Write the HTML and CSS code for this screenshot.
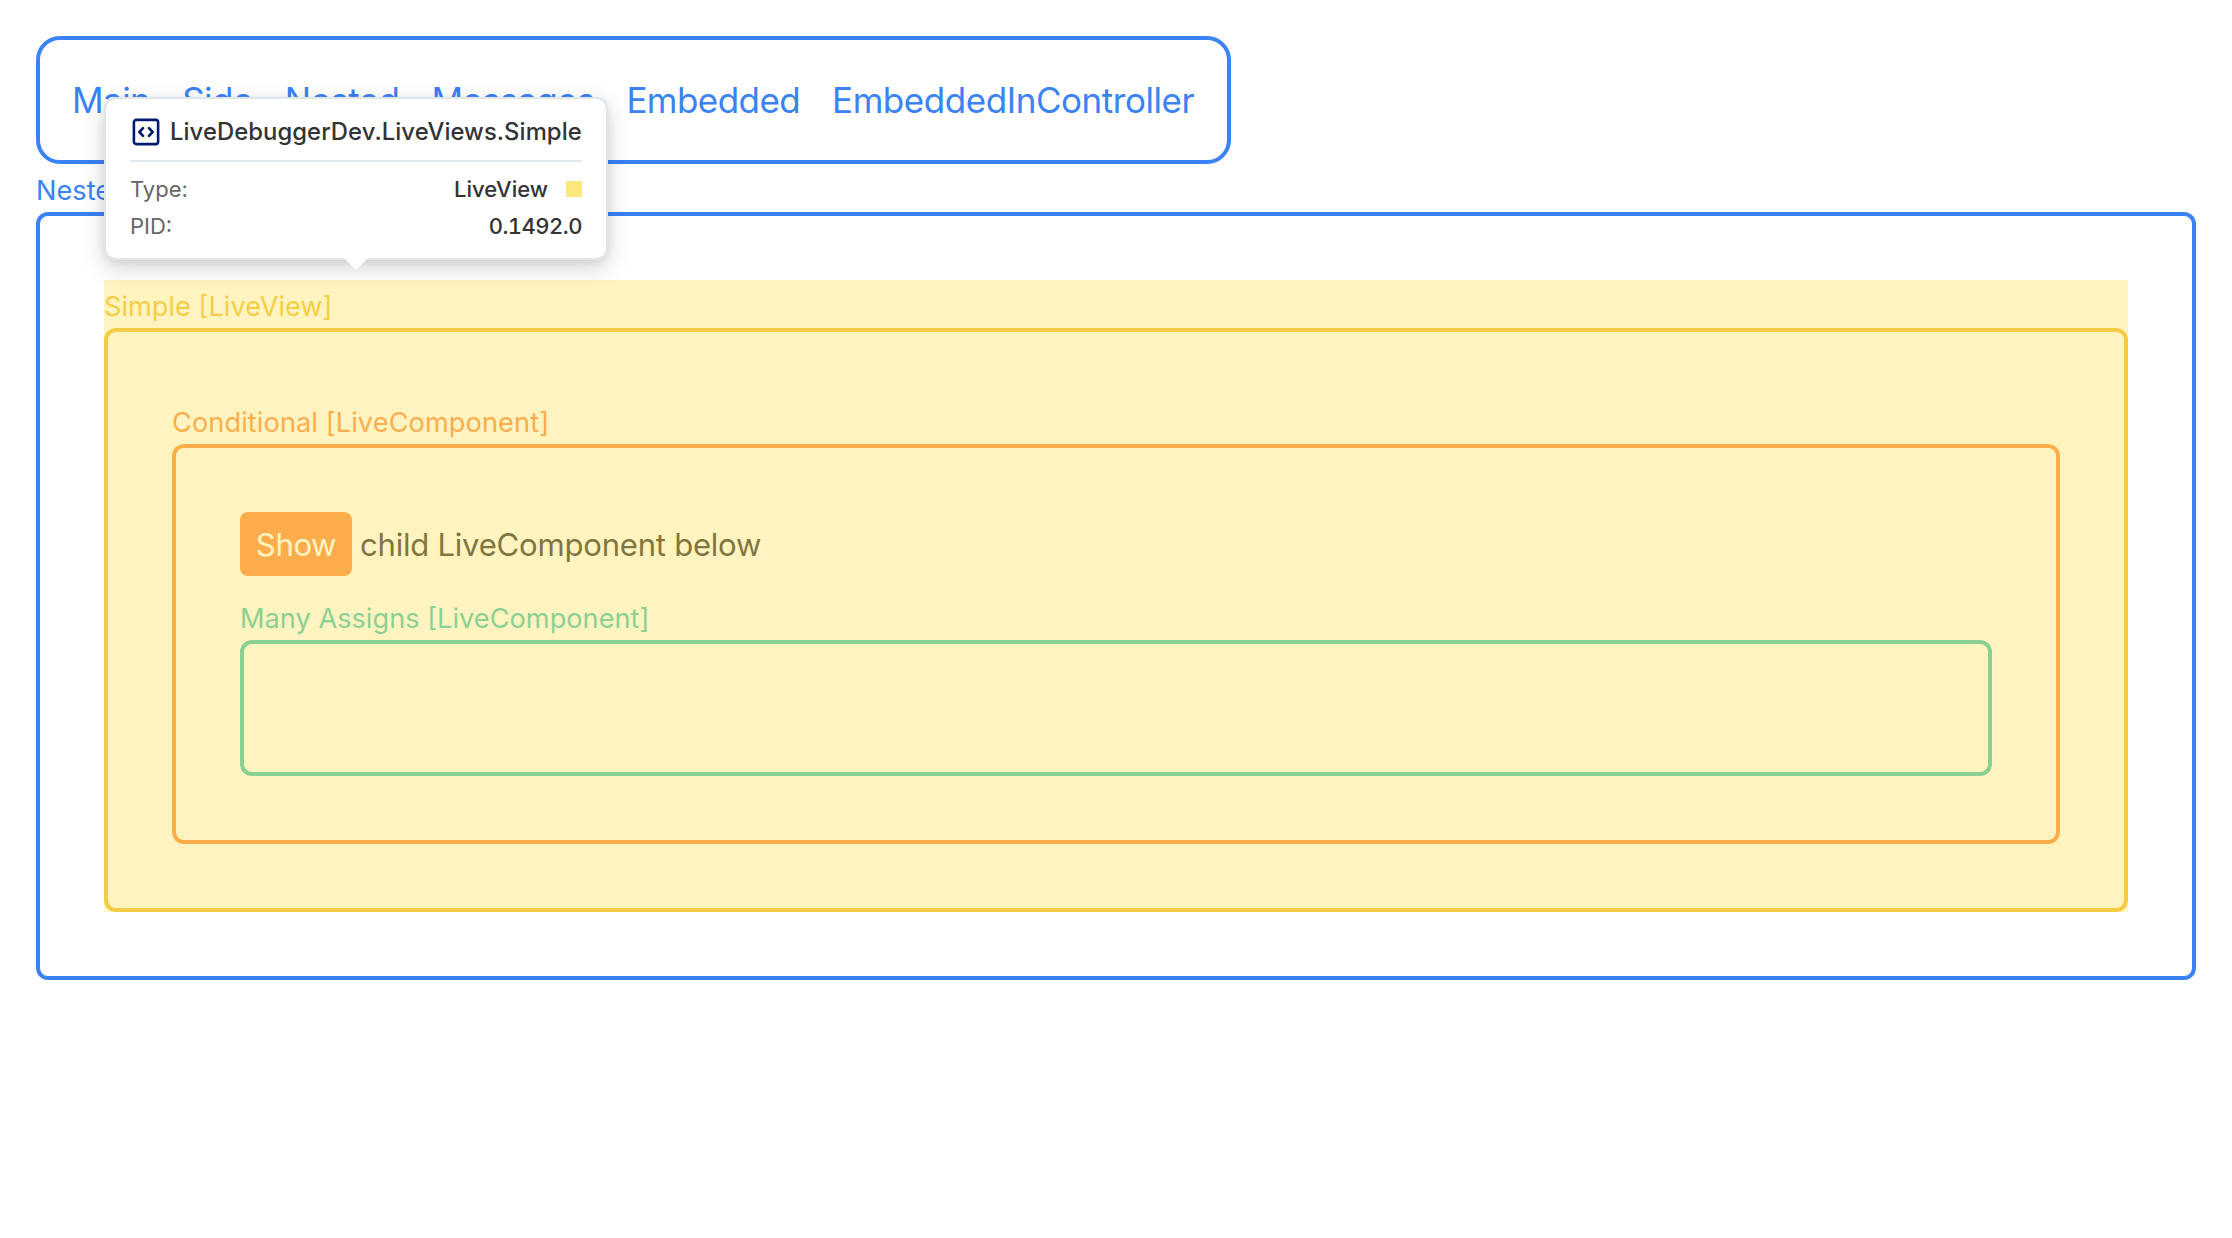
FILE: index.html
```html
<!DOCTYPE html>
<html lang="en">
<head>
<meta charset="utf-8">
<title>Nested</title>
<link rel="stylesheet" href="styles.css">
</head>
<body>
<nav class="nav">
  <a class="nav-link">Main</a>
  <a class="nav-link">Side</a>
  <a class="nav-link">Nested</a>
  <a class="nav-link tight">Messages</a>
  <a class="nav-link">Embedded</a>
  <a class="nav-link loose">EmbeddedInController</a>
</nav>
<section class="component blue">
  <div class="label">Nested [LiveView]</div>
  <div class="box">
    <section class="component yellow highlighted">
      <div class="label">Simple [LiveView]</div>
      <div class="box">
        <section class="component orange">
          <div class="label">Conditional [LiveComponent]</div>
          <div class="box">
            <div class="row"><button class="button">Show</button><span>child LiveComponent below</span></div>
            <section class="component green">
              <div class="label">Many Assigns [LiveComponent]</div>
              <div class="box"></div>
            </section>
          </div>
        </section>
      </div>
    </section>
  </div>
</section>
<aside class="tooltip">
  <header class="tooltip-head">
    <svg class="icon" viewBox="0 0 28 28" fill="none" stroke="#001a72" stroke-linecap="round" stroke-linejoin="round">
      <rect x="1.9" y="1.9" width="24.2" height="24.2" rx="2.4" stroke-width="2.6"/>
      <path d="M11 10.2 7.4 14l3.6 3.8M17 10.2l3.6 3.8-3.6 3.8" stroke-width="2.6"/>
    </svg>
    <span class="title">LiveDebuggerDev.LiveViews.Simple</span>
  </header>
  <div class="info"><span class="key">Type:</span><span class="value">LiveView</span><i class="swatch"></i></div>
  <div class="info"><span class="key">PID:</span><span class="value number">0.1492.0</span></div>
</aside>
</body>
</html>
```
FILE: styles.css
```css
* { box-sizing: border-box; }
body {
  margin: 0;
  padding: 36px;
  background: #fff;
  color: #000;
  font: 31.1px/48px Inter, sans-serif;
}
.nav {
  display: flex;
  gap: 32px;
  width: 1195px;
  height: 128px;
  padding: 40px 32px;
  border: 4px solid #3b82f6;
  border-radius: 24px;
  color: #3b82f6;
  font-size: 35px;
  line-height: 40px;
  letter-spacing: -.57px;
}
.tight { letter-spacing: -.75px; }
.loose { letter-spacing: -.45px; }
.component { position: relative; }
.blue { color: #3b82f6; }
.yellow { color: #eab308; }
.orange { color: #f97316; }
.green { color: #14b8a6; }
.label { height: 48px; font-size: 27.2px; line-height: 53px; }
.orange > .label { letter-spacing: .08px; }
.green > .label { letter-spacing: 0; }
.box { padding: 64px; border: 4px solid; border-radius: 12px; }
.highlighted::after {
  content: "";
  position: absolute;
  inset: 0;
  background: #ffe780;
  opacity: .5;
}
.row {
  display: flex;
  align-items: center;
  gap: 8px;
  height: 64px;
  margin-bottom: 16px;
  color: #000;
  line-height: 50px;
  letter-spacing: -.25px;
}
.row span { padding-top: 1px; }
.button {
  width: 112px;
  height: 64px;
  padding: 1px 0 0;
  border: 0;
  border-radius: 8px;
  background: #f97316;
  color: #fff;
  font: inherit;
  letter-spacing: -.4px;
}
.tooltip {
  position: absolute;
  left: 104px;
  top: 97px;
  width: 504px;
  height: 163px;
  padding: 0 24px;
  border: 2px solid #e0e5ea;
  border-radius: 12px;
  background: #fff;
  color: #333;
  box-shadow: 0 8px 24px rgba(0, 0, 0, .16), 0 3px 8px rgba(0, 0, 0, .08);
  font-size: 22px;
}
.tooltip::after {
  content: "";
  position: absolute;
  left: 238px;
  top: 159px;
  border: 12px solid transparent;
  border-top-color: #fff;
  border-bottom: 0;
}
.tooltip-head {
  display: flex;
  align-items: center;
  gap: 10px;
  height: 63px;
  margin-bottom: 8px;
  padding-top: 4px;
  border-bottom: 2px solid #e0e5ea;
}
.icon { width: 28px; height: 28px; margin-left: 2px; }
.title { font-size: 23.8px; font-weight: 500; white-space: nowrap; letter-spacing: .08px; }
.info { display: flex; align-items: center; height: 37px; }
.key { margin-right: auto; color: #666; }
.value { font-weight: 500; }
.number { font-variant-numeric: tabular-nums; letter-spacing: -.5px; }
.swatch { width: 16px; height: 16px; margin-left: 18px; background: #ffe780; }
```
